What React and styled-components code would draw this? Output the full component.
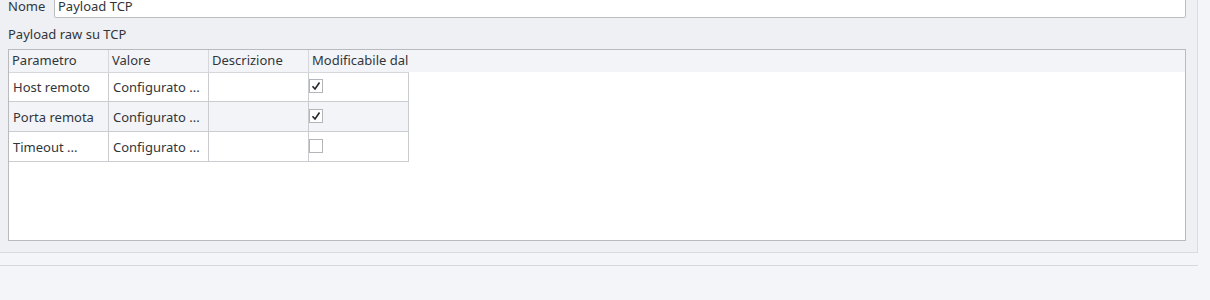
import React from "react";
import styled, { createGlobalStyle } from "styled-components";

const Global = createGlobalStyle`
  html, body { margin: 0; padding: 0; background: #f4f5f8; }
  body { font-family: "Noto Sans", "Open Sans", sans-serif; font-size: 13px; color: #31363b; overflow: hidden; }
`;

const Page = styled.div`
  width: 1210px;
  height: 300px;
  background: #f4f5f8;
  overflow: hidden;
`;

const Panel = styled.div`
  width: 1198px;
  background: #eff0f4;
  border-right: 1px solid #dadbdf;
  border-bottom: 1px solid #dadbdf;
  padding: 0 11px 11px 8px;
  box-sizing: border-box;
  margin-top: -6px;
`;

const FieldRow = styled.div`
  display: flex;
  align-items: center;
  height: 24px;
  gap: 9px;
`;

const Label = styled.label`
  line-height: 18px;
  width: 37px;
`;

const Input = styled.div`
  flex: 1;
  height: 24px;
  box-sizing: border-box;
  border: 1px solid #bcbdc0;
  border-radius: 2px;
  background: #fff;
  padding: 0 3px;
  display: flex;
  align-items: center;
  white-space: nowrap;
`;

const Caption = styled.div`
  margin: 7px 0 6px;
  height: 18px;
  line-height: 18px;
`;

const TableBox = styled.div`
  height: 192px;
  box-sizing: border-box;
  border: 1px solid #b9babd;
  background: #fff;
  display: flex;
  flex-direction: column;
`;

const HeaderBar = styled.div`
  display: flex;
  height: 22px;
  background: #f3f4f8;
`;

const HeadCell = styled.div`
  width: 100px;
  box-sizing: border-box;
  padding-left: 3px;
  line-height: 21px;
  white-space: nowrap;
  overflow: hidden;
  border-right: ${(p) => (p.$last ? "none" : "1px solid #d6d7da")};
`;

const Body = styled.div`
  width: 400px;
  display: flex;
  flex-direction: column;
`;

const Row = styled.div`
  display: flex;
  height: 30px;
  background: ${(p) => (p.$alt ? "#f3f4f8" : "#fff")};
  border-bottom: 1px solid #cbcccf;
  border-top: ${(p) => (p.$first ? "1px solid #d6d7da" : "none")};
  box-sizing: border-box;
`;

const Cell = styled.div`
  width: 100px;
  box-sizing: border-box;
  border-right: 1px solid #cbcccf;
  padding-left: 4px;
  display: flex;
  align-items: center;
  white-space: nowrap;
  overflow: hidden;
`;

const CheckCell = styled(Cell)`
  padding-left: 0;
  align-items: flex-start;
  padding-top: ${(p) => p.$top}px;
`;

const Box = styled.span`
  width: 14px;
  height: 14px;
  box-sizing: border-box;
  border: 1px solid #b4b5b8;
  background: #fff;
  display: flex;
  align-items: center;
  justify-content: center;
`;

const Check = ({ on }) => (
  <Box>
    {on && (
      <svg width="10" height="10" viewBox="0 0 10 10">
        <path d="M1.5 5.2 L4 8 L8.5 1.5" fill="none" stroke="#232629" strokeWidth="1.6" />
      </svg>
    )}
  </Box>
);

const Footer = styled.div`
  height: 12px;
  width: 1198px;
  border-bottom: 1px solid #d8d9dc;
`;

const rows = [
  { p: "Host remoto", v: "Configurato ...", on: true },
  { p: "Porta remota", v: "Configurato ...", on: true },
  { p: "Timeout ...", v: "Configurato ...", on: false },
];

export default function App() {
  return (
    <Page>
      <Global />
      <Panel>
        <FieldRow>
          <Label>Nome</Label>
          <Input>Payload TCP</Input>
        </FieldRow>
        <Caption>Payload raw su TCP</Caption>
        <TableBox>
          <HeaderBar>
            <HeadCell>Parametro</HeadCell>
            <HeadCell>Valore</HeadCell>
            <HeadCell>Descrizione</HeadCell>
            <HeadCell $last>Modificabile dal</HeadCell>
          </HeaderBar>
          <Body>
            {rows.map((r, i) => (
              <Row key={i} $alt={i === 1} $first={i === 0}>
                <Cell>{r.p}</Cell>
                <Cell>{r.v}</Cell>
                <Cell />
                <CheckCell $top={i === 0 ? 6 : 7}>
                  <Check on={r.on} />
                </CheckCell>
              </Row>
            ))}
          </Body>
        </TableBox>
      </Panel>
      <Footer />
    </Page>
  );
}
